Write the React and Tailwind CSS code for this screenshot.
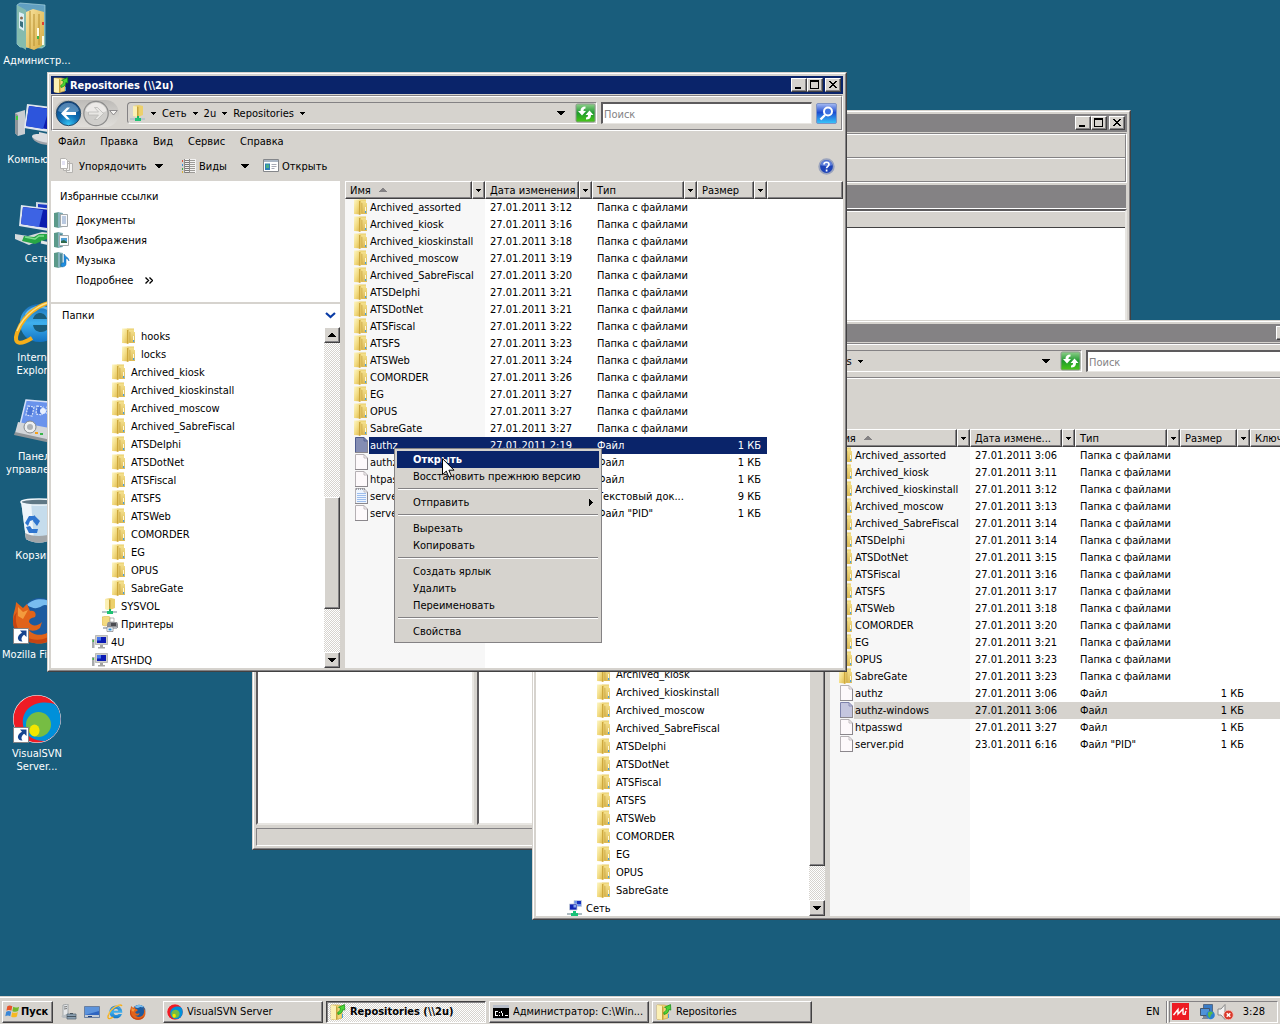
import React from "react";
import clsx from "clsx";

const RAISED =
  "border border-t-white border-l-white border-r-[#424142] border-b-[#424142] bg-[#d6d3ce] shadow-[inset_-1px_-1px_0_#848284]";
const DITHER = "bg-[repeating-conic-gradient(#fff_0_25%,#d6d3ce_0_50%)] bg-[length:2px_2px]";

/* ---------- small glyphs ---------- */

function Caret({ size = 5, className }) {
  if (size === 7) {
    return (
      <svg width="8" height="4" viewBox="0 0 8 4" shapeRendering="crispEdges" className={className}>
        <path d="M0 0h8v1H7v1H6v1H5v1H3V3H2V2H1V1H0z" fill="currentColor" />
      </svg>
    );
  }
  return (
    <svg width="5" height="3" viewBox="0 0 5 3" shapeRendering="crispEdges" className={className}>
      <path d="M0 0h5v1H4v1H3v1H2V2H1V1H0z" fill="currentColor" />
    </svg>
  );
}

function FolderIcon() {
  return (
    <svg width="14" height="16" viewBox="0 0 14 16" className="shrink-0">
      <defs>
        <linearGradient id="fl" x1="0" y1="0" x2="1" y2="1">
          <stop offset="0" stopColor="#fdf7c8" />
          <stop offset=".5" stopColor="#f3dd85" />
          <stop offset="1" stopColor="#dcb64a" />
        </linearGradient>
        <linearGradient id="fr" x1="0" y1="0" x2="0" y2="1">
          <stop offset="0" stopColor="#f6e391" />
          <stop offset="1" stopColor="#dcba55" />
        </linearGradient>
      </defs>
      <path d="M5 1h7v3h1v11H5z" fill="url(#fr)" />
      <path d="M5 .5h7v1H5z" fill="#e6ca62" />
      <path d="M0 .5h5l1 1V16l-2-.8L0 15z" fill="url(#fl)" />
      <path d="M5 2h1.500v14L5 15.300z" fill="#cda73c" />
      <path d="M6.500 3h1v12h-1z" fill="#e9cd6e" />
      <path d="M7.500 4h.8v10.500h-.8z" fill="#c9a545" />
      <path d="M11 8h1v5h-1z" fill="#fff8d8" />
      <path d="M12 8h1v6h-1z" fill="#e3c768" />
      <path d="M11 12h1.200v2H11z" fill="#4b9fdd" />
    </svg>
  );
}

function FolderUpIcon() {
  return (
    <svg width="16" height="16" viewBox="0 0 16 16" className="shrink-0">
      <path d="M1 1h7l4 1v12l-7 2-4-1z" fill="#f0d677" stroke="#c7a23c" strokeWidth="0.6" />
      <path d="M1 1l5 1v13.700L1 15z" fill="#fbf0b4" />
      <path d="M6 2l1.500 1v12L6 15.700z" fill="#c7a23c" />
      <path d="M8 10.500c3.200-.8 4.700-2.500 4.800-5l2 .6L14.500.600 8.500 3.300l2 .9C10.300 6.500 9.500 7.500 7.700 8.500z" fill="#4bd534" stroke="#148a12" strokeWidth="0.7" />
      <path d="M12 10h1v4h-1z" fill="#4aa0e2" />
    </svg>
  );
}

function NetFolderIcon() {
  return (
    <svg width="15" height="16" viewBox="0 0 15 16" className="shrink-0">
      <path d="M3 1 9 0l4 1v9l-5 2-5-1z" fill="#ecd06b" />
      <path d="M3 1l4 .5V12l-4-1z" fill="#fbf0b4" />
      <path d="M7 1.500 8.500 2v9.500L7 12z" fill="#c7a23c" />
      <path d="M7 11h2v2h2v2H5v-2h2z" fill="#17b567" />
      <path d="M0 13h5v2H0zM11 13h4v2h-4z" fill="#b8c6cc" />
      <path d="M5 13h6v3H5z" fill="#1fc274" />
    </svg>
  );
}

function PrintersIcon() {
  return (
    <svg width="16" height="16" viewBox="0 0 16 16" className="shrink-0">
      <path d="M0 1l5-1 3 1v8l-5 1-3-1z" fill="#f3da80" stroke="#d0ad4a" strokeWidth="0.5" />
      <path d="M8 2h4v4H8z" fill="#fff" stroke="#999" strokeWidth="0.7" />
      <path d="M6 6h9l1 2v4H5V8z" fill="#8d8f94" />
      <path d="M9 7h5v3H9z" fill="#4a4c52" />
      <path d="M1 11h14v2H1z" fill="#b6babf" />
      <path d="M5 11h6v4.500H5z" fill="#fff" stroke="#7c8086" strokeWidth="0.7" />
      <path d="M6.500 12.500h3v2h-3z" fill="#2b8bd4" />
    </svg>
  );
}

function ComputerIcon() {
  return (
    <svg width="16" height="14" viewBox="0 0 16 14" className="shrink-0">
      <path d="M0 4h2.500v9H0z" fill="#a9abac" />
      <path d="M.6 5h1.300v2H.6z" fill="#3fb63f" />
      <path d="M3.500.5h12v9h-12z" fill="#d0d0cc" stroke="#9a9a98" strokeWidth="0.6" />
      <path d="M5 2h9v6H5z" fill="#0c1bb4" />
      <path d="M5 2h4v3.500H5z" fill="#4a78ec" />
      <path d="M8 10h3v2h2v1.500H6V12h2z" fill="#a5a5a3" />
    </svg>
  );
}

function NetworkIcon() {
  return (
    <svg width="15" height="16" viewBox="0 0 15 16" className="shrink-0">
      <path d="M7 .5h7.500v6H7z" fill="#6c93ea" stroke="#c3cbd8" strokeWidth="0.7" />
      <path d="M10 1h4v3h-4z" fill="#1730bd" />
      <path d="M2.500 4h7.500v6H2.500z" fill="#1226b4" stroke="#c3cbd8" strokeWidth="0.8" />
      <path d="M6.500 5h2.500v2.500H6.500z" fill="#83a4f3" />
      <path d="M6 11h3v2h2v3H4v-3h2z" fill="#17c277" />
      <path d="M0 13h4v2H0zM11 13h4v2h-4z" fill="#aebcc2" />
    </svg>
  );
}

function FileIcon({ fill = "#fdf9fb", stroke = "#b5b0b4", lined }) {
  return (
    <svg width="14" height="16" viewBox="0 0 14 16" className="shrink-0">
      <path d="M1.500.5H10L13.500 4v11.500H1.500z" fill={fill} stroke={stroke} />
      <path d="M1 15.500h13M13.500 4v12" stroke="#8b878c" />
      <path d="M10 .5V4h3.500" fill="none" stroke={stroke} strokeWidth="0.8" />
      {lined && <path d="M3 5.500h9M3 7.500h9M3 9.500h9M3 11.500h9M3 13.500h9" stroke="#9dbdec" />}
      {lined && <path d="M2 1h9" stroke="#848890" strokeWidth="1.600" strokeDasharray="1 1" />}
    </svg>
  );
}

function Orbit({ size = 16, idPrefix }) {
  return (
    <svg width={size} height={size} viewBox="0 0 48 48" className="shrink-0">
      <defs>
        <clipPath id={`${idPrefix}-c`}>
          <circle cx="24" cy="24" r="23.500" />
        </clipPath>
      </defs>
      <circle cx="24" cy="24" r="24" fill="#fff" />
      <g clipPath={`url(#${idPrefix}-c)`}>
        <path d="M0 0h48v48H0z" fill="#ee1c25" />
        <path d="M10 30C8 14 22 5 38 8l12 4v26L32 46C20 46 11 40 10 30z" fill="#0090da" />
        <circle cx="25.500" cy="29.500" r="12.500" fill="#76bd43" />
        <ellipse cx="21.500" cy="35.500" rx="5" ry="6" fill="#f2e600" />
      </g>
    </svg>
  );
}

function IeIcon({ size = 16 }) {
  return (
    <svg width={size} height={size} viewBox="0 0 48 48" className="shrink-0">
      <defs>
        <linearGradient id="ie" x1="0" y1="0" x2="0" y2="1">
          <stop offset="0" stopColor="#1b6fb8" />
          <stop offset=".5" stopColor="#3fb0ee" />
          <stop offset="1" stopColor="#1173c4" />
        </linearGradient>
      </defs>
      <path
        d="M27 5c11 0 19 8 19 21H20c1 5 4 7 8 7 3 0 5-1 7-3h10c-3 8-9 13-18 13C15 43 7 35 7 24S15 5 27 5zM20 20h14c-1-4-4-6-7-6s-6 2-7 6z"
        fillRule="evenodd"
        fill="url(#ie)"
      />
      <path d="M13 16c3-5 8-8 14-8 5 0 10 2 13 6" fill="none" stroke="#8fd6fb" strokeWidth="2.500" opacity=".7" />
      <path d="M45 6C40-2 12 10 4 34c-4 12 4 12 15 5" fill="none" stroke="#f5ae1a" strokeWidth="4" />
      <path d="M40 3C28 4 11 15 4 32" fill="none" stroke="#fde08a" strokeWidth="1.500" />
    </svg>
  );
}

function FirefoxIcon({ size = 16 }) {
  return (
    <svg width={size} height={size} viewBox="0 0 48 48" className="shrink-0">
      <circle cx="27" cy="21" r="19" fill="#1c5ba0" />
      <path d="M14 9C20 2 34 1 41 9c-5 3-7-2-12 1s-9 3-15-1z" fill="#79bdf0" />
      <path d="M3 6l7 6 4-4 3 7c4-1 7 2 5 6-4 1-6 2-6 5 3 5 9 4 13 0l-2 6c-5 4-10 3-12 1 5 8 20 8 25-2 3-6 3-13 0-20 7 8 8 18 4 26-5 9-14 12-23 10C7 45 0 36 0 24 0 17 3 12 3 6z" fill="#e1631a" />
      <path d="M4 16c-3 9 0 20 9 25 10 5 22 3 30-6-3 10-13 14-22 12C7 45 0 36 0 25c0-4 2-7 4-9z" fill="#c64412" />
      <path d="M5 11l5 5 5-2-5 9-5-3z" fill="#f39b3d" />
    </svg>
  );
}

/* ---------- desktop shortcuts ---------- */

function ShortcutArrow() {
  return (
    <g>
      <path d="M.5 32.500h15v15H.5z" fill="#fff" stroke="#848284" />
      <path d="M7 34.500h6.500V41l-2.300-2.300C8 41 8 43.500 9.500 45.500 4.500 46 2.500 40 9 36.700z" fill="#16448f" />
    </g>
  );
}

function UserFolderArt() {
  return (
    <svg width="48" height="48" viewBox="0 0 48 48">
      <defs>
        <linearGradient id="ub" x1="0" y1="0" x2="0" y2="1">
          <stop offset="0" stopColor="#5f9dc4" />
          <stop offset="1" stopColor="#7dbf9d" />
        </linearGradient>
        <linearGradient id="uy" x1="0" y1="0" x2="1" y2="1">
          <stop offset="0" stopColor="#f8e4a0" />
          <stop offset="1" stopColor="#d6ab42" />
        </linearGradient>
      </defs>
      <path d="M4 3l3-2 25 2v41l-3 2-22-1-3-3z" fill="url(#ub)" stroke="#a8d6df" strokeWidth="0.7" />
      <path d="M13 10l7-3 11 3v32l-4 3-6 3-8-3z" fill="url(#uy)" />
      <path d="M4 3l9 5v40l-9-6z" fill="#86bcae" opacity=".95" />
      <path d="M6 10l5 2v17l-5-3z" fill="#dbeef5" />
      <circle cx="8.500" cy="16" r="1.500" fill="#8f6a4a" />
      <path d="M7 19l3 1v6l-3-2z" fill="#39707f" />
      <path d="M17 9v37M21 12v32M26 12v31" stroke="#b78f30" strokeWidth="1" />
      <path d="M24 26h2v10h-2zM29 34h2v9h-2z" fill="#fffbe3" />
      <path d="M24 34h2v3h-2z" fill="#43b54a" />
      <path d="M29 20h2v3h-2z" fill="#e2412e" />
    </svg>
  );
}

function ComputerArt() {
  return (
    <svg width="48" height="48" viewBox="0 0 48 48">
      <path d="M2 12l10-3v24l-7 2-3-3z" fill="#c9cdd1" />
      <path d="M2 12l3 2v21l-3-3z" fill="#8e9499" />
      <path d="M3 15h2v4H3z" fill="#3ecb3e" />
      <path d="M14 3l33 4v26l-36-6z" fill="#dfe6ee" />
      <path d="M16 5l31 4v21l-34-5z" fill="#0c1cae" />
      <path d="M16 5l20 3-6 20-17-3z" fill="#2d55dc" />
      <path d="M26 31l9 2 12 3v6c-10 3-24 0-28-6 0-3 3-3 7-3z" fill="#dcdde0" />
      <path d="M19 36c5 5 18 7 28 5v2c-12 3-26 0-28-7z" fill="#a1a4aa" />
    </svg>
  );
}

function NetworkArt() {
  return (
    <svg width="48" height="48" viewBox="0 0 48 48">
      <path d="M23 2l24 2v22H23z" fill="#cfd8e4" />
      <path d="M25 4l22 2v18H25z" fill="#1b37c6" />
      <path d="M8 5l39 5v23L6 26z" fill="#dfe6ee" />
      <path d="M10 7l37 4v19L8 24z" fill="#0c1cae" />
      <path d="M10 7l20 3-4 17-18-3z" fill="#3d63e4" />
      <path d="M2 34l13 2 14-4 18 2v3l-15 1-16 7L2 39z" fill="#d5dadc" />
      <path d="M11 36l10 1 5-3h8v5l-12 5-13-3z" fill="#28a745" />
      <path d="M12 37l10 2 4-3h5" stroke="#7fe08f" strokeWidth="1.500" fill="none" />
      <path d="M28 42l19 4" stroke="#e3e7e9" strokeWidth="3" />
    </svg>
  );
}

function ControlPanelArt() {
  return (
    <svg width="48" height="48" viewBox="0 0 48 48">
      <path d="M13 2l34 3v28L7 27z" fill="#6a93ec" stroke="#d5e0f8" strokeWidth="1.500" />
      <path d="M15 8l6 1-2 9-6-1zM24 8l6 1-1 8-6-1zM34 9h9v8h-9z" fill="#4c77d8" stroke="#dbe6fb" strokeWidth="1.200" strokeDasharray="2 1" />
      <circle cx="30" cy="13" r="3" fill="#e8f0ff" />
      <path d="M5 24l42 8v13L2 35z" fill="#d3d6da" />
      <path d="M2 34l45 10v3L1 37z" fill="#8f9498" />
      <circle cx="17" cy="29" r="6" fill="#eef0f1" stroke="#85898d" />
      <circle cx="17" cy="29" r="3" fill="#aeb2b6" />
      <path d="M22 34h3v2h-3z" fill="#f6a01a" />
      <path d="M27 35h3v2h-3z" fill="#39b54a" />
    </svg>
  );
}

function RecycleBinArt() {
  return (
    <svg width="48" height="48" viewBox="0 0 48 48">
      <path d="M8 4h36l-5 38c-8 5-18 5-26 0z" fill="#c5dcec" />
      <path d="M8 4h10l3 40c-3 0-6-1-8-2z" fill="#edf5fa" />
      <ellipse cx="26" cy="5" rx="18" ry="3" fill="#5f7886" stroke="#eef6fb" strokeWidth="1.500" />
      <path d="M12 36c7 4 20 4 28 0l-1 6c-8 5-18 5-26 0z" fill="#a2a6a9" />
      <path d="M12 26l4-7h6l-2 4-3 1-2 5zM21 18l6 6-3 5-4-5zM13 30l4-1 2 3h6l-1 4h-8z" fill="#2e75cf" />
    </svg>
  );
}

function FirefoxArt() {
  return (
    <div className="grid">
      <div className="col-start-1 row-start-1">
        <FirefoxIcon size={48} />
      </div>
      <svg width="48" height="48" viewBox="0 0 48 48" className="col-start-1 row-start-1">
        <ShortcutArrow />
      </svg>
    </div>
  );
}

function VisualSvnArt() {
  return (
    <div className="grid">
      <div className="col-start-1 row-start-1">
        <Orbit size={48} idPrefix="desk" />
      </div>
      <svg width="48" height="48" viewBox="0 0 48 48" className="col-start-1 row-start-1">
        <ShortcutArrow />
      </svg>
    </div>
  );
}

const shortcuts = [
  { label: "Администр...", art: <UserFolderArt /> },
  { label: "Компьютер", art: <ComputerArt /> },
  { label: "Сеть", art: <NetworkArt /> },
  { label: "Internet Explorer", art: <IeIcon size={48} /> },
  { label: "Панель управления", art: <ControlPanelArt /> },
  { label: "Корзина", art: <RecycleBinArt /> },
  { label: "Mozilla Firefox", art: <FirefoxArt />, wide: true },
  { label: "VisualSVN Server...", art: <VisualSvnArt /> },
];

function DesktopShortcut({ label, art, wide }) {
  return (
    <button className="flex flex-col items-center w-[74px] h-[99px] pt-0.5 gap-1 text-white leading-[13px]">
      {art}
      <span className={clsx("text-center", wide && "whitespace-nowrap")}>{label}</span>
    </button>
  );
}

/* ---------- window chrome ---------- */

function CaptionButton({ kind }) {
  return (
    <button aria-label={kind} className={clsx("w-4 h-3.5 flex items-center justify-center text-black", RAISED)}>
      <svg width="12" height="10" viewBox="0 0 12 10" shapeRendering="crispEdges">
        {kind === "minimize" && <path d="M2 7h6v2H2z" fill="currentColor" />}
        {kind === "maximize" && <path d="M1 0h9v9H1zM2 2v6h7V2z" fillRule="evenodd" fill="currentColor" />}
        {kind === "close" && (
          <path d="M2 1h2v1h1v1h2V2h1V1h2v1H9v1H8v1H7v1h1v1h1v1h1v1H8V7H7V6H5v1H4v1H2V7h1V6h1V5h1V4H4V3H3V2H2z" fill="currentColor" />
        )}
      </svg>
    </button>
  );
}

function DesktopWindow({ title, icon, active, className, children }) {
  return (
    <section
      className={clsx(
        "absolute border border-t-[#d6d3ce] border-l-[#d6d3ce] border-r-[#424142] border-b-[#424142]",
        className
      )}
    >
      <div className="h-full flex flex-col border border-t-white border-l-white border-r-[#848284] border-b-[#848284] bg-[#d6d3ce] p-0.5">
        <div className={clsx("h-[18px] shrink-0 flex items-center px-0.5 text-white font-bold", active ? "bg-[#0a246a]" : "bg-[#848284]")}>
          {icon}
          <span className="flex-1 pl-px whitespace-nowrap">{title}</span>
          <CaptionButton kind="minimize" />
          <CaptionButton kind="maximize" />
          <div className="w-0.5" />
          <CaptionButton kind="close" />
        </div>
        {children}
      </div>
    </section>
  );
}

function Etched({ className, children }) {
  return (
    <div className="shrink-0 border border-t-[#848284] border-l-[#848284] border-r-white border-b-white">
      <div className={clsx("border border-t-white border-l-white border-r-[#848284] border-b-[#848284]", className)}>
        {children}
      </div>
    </div>
  );
}

/* ---------- explorer ---------- */

function NavButtons() {
  return (
    <div className="flex items-center h-[27px] rounded-full bg-linear-to-b from-[#bdbbb8] via-[#d0ceca] to-[#e0deda] px-px">
      <button aria-label="Назад">
        <svg width="27" height="27" viewBox="0 0 27 27" className="block">
          <defs>
            <radialGradient id="nb" cx=".5" cy=".95" r=".9">
              <stop offset="0" stopColor="#35c5f5" />
              <stop offset=".45" stopColor="#0f6fb4" />
              <stop offset="1" stopColor="#0b3f7d" />
            </radialGradient>
          </defs>
          <circle cx="13.500" cy="13.500" r="12.200" fill="url(#nb)" stroke="#2c4d68" />
          <path d="M3 11a10.800 10.800 0 0 1 21 0c-6 3-15 3-21 0z" fill="#a8cfe6" opacity=".45" />
          <path d="M6 13.500l6-6h3l-4 4.500h10v3H11l4 4.500h-3z" fill="#fff" />
        </svg>
      </button>
      <button aria-label="Вперёд">
        <svg width="27" height="27" viewBox="0 0 27 27" className="block">
          <circle cx="14" cy="13.500" r="12.200" fill="#cfcecb" stroke="#8b8b8b" strokeWidth="1.200" />
          <path d="M3.500 11a10.800 10.800 0 0 1 21 0c-6 3-15 3-21 0z" fill="#f2f1ef" opacity=".8" />
          <path d="M21.500 13.500l-6-6h-3l4 4.500h-10v3h10l-4 4.500h3z" fill="#e8e7e4" stroke="#b5b4b1" strokeWidth="0.700" />
        </svg>
      </button>
      <svg width="9" height="6" viewBox="0 0 9 6">
        <path d="M.7.5h7.600L4.500 5z" fill="#f3f2f0" stroke="#848284" strokeWidth="0.900" />
      </svg>
    </div>
  );
}

function AddressBar({ crumbs, crumbPad }) {
  return (
    <Etched className="h-[34px] flex items-center gap-1 pl-px pr-1">
      <NavButtons />
      <div className="flex-1 ml-1 h-[22px] flex items-center rounded-l-sm border border-t-[#848284] border-l-[#848284] border-r-white border-b-white pl-0.5">
        <NetFolderIcon />
        <div className={clsx("flex-1 flex items-center gap-1.5", crumbPad)}>
          <Caret />
          {crumbs.map((crumb) => (
            <React.Fragment key={crumb}>
              <a href="#" className="whitespace-nowrap">{crumb}</a>
              <Caret />
            </React.Fragment>
          ))}
        </div>
        <Caret size={7} />
        <button aria-label="Обновить" className="ml-2.5">
          <svg width="21" height="20" viewBox="0 0 21 20" className="block">
            <defs>
              <linearGradient id="rf" x1="0" y1="0" x2="0" y2="1">
                <stop offset="0" stopColor="#8fd08c" />
                <stop offset=".5" stopColor="#1f9a2e" />
                <stop offset="1" stopColor="#49c818" />
              </linearGradient>
            </defs>
            <rect x="1" y="1" width="19" height="18" rx="1.500" fill="url(#rf)" stroke="#8b9a8b" />
            <path d="M10.500 3.500C7 3.500 5.500 5 5.500 8H3l4 4.500L11 8H8.500c0-1.500.5-2.300 2-2.500z" fill="#fff" />
            <path d="M11 16.500c3.500 0 5-1.500 5-4.500h2.500l-4-4.500L10.500 12H13c0 1.500-.5 2.300-2 2.500z" fill="#fff" />
          </svg>
        </button>
      </div>
      <input
        aria-label="Поиск"
        placeholder="Поиск"
        className="w-[211px] h-[22px] bg-white px-px pt-0.5 border-t-2 border-l-2 border-r border-b border-t-[#5d5b5d] border-l-[#5d5b5d] border-r-[#e8e6e2] border-b-[#e8e6e2] placeholder:text-[#848284] outline-none"
      />
      <button aria-label="Найти">
        <svg width="21" height="21" viewBox="0 0 21 21" className="block">
          <defs>
            <linearGradient id="sb" x1="0" y1="0" x2="0" y2="1">
              <stop offset="0" stopColor="#a9bdf3" />
              <stop offset=".45" stopColor="#1d4dd0" />
              <stop offset="1" stopColor="#38c8fb" />
            </linearGradient>
          </defs>
          <rect x=".5" y=".5" width="20" height="20" rx="1.500" fill="url(#sb)" stroke="#7f93c4" />
          <path d="M4.500 16.500 9 12" stroke="#fff" strokeWidth="2.400" />
          <circle cx="12" cy="8.500" r="4" fill="#3f74e2" stroke="#fff" strokeWidth="2" />
        </svg>
      </button>
    </Etched>
  );
}

function MenuBar() {
  return (
    <nav className="h-5 shrink-0 flex items-center gap-[15px] pl-[7px]">
      {["Файл", "Правка", "Вид", "Сервис", "Справка"].map((item) => (
        <button key={item}>{item}</button>
      ))}
    </nav>
  );
}

function Toolbar() {
  return (
    <div className="h-[30px] shrink-0 flex items-center pl-2 pr-2">
      <button className="flex items-center gap-1 w-[122px]">
        <svg width="16" height="16" viewBox="0 0 16 16">
          <path d="M7.500 5.500h6v9h-6zM4.500 3.500h6v9h-6z" fill="#f4f3f1" stroke="#b5b3b0" />
          <path d="M1.500.5h5l2 2v8h-7z" fill="#fff" stroke="#b5b3b0" />
          <path d="M3 4h3M3 6h3" stroke="#c9c8ea" />
        </svg>
        Упорядочить
        <Caret size={7} className="ml-1" />
      </button>
      <button className="flex items-center gap-0.5 w-[82px]">
        <svg width="16" height="16" viewBox="0 0 16 16" shapeRendering="crispEdges">
          <path d="M3 1h12v14H3z" fill="#f4f3f2" />
          <path d="M4 2h4v1H4zM4 4h4v1H4zM4 6h4v1H4zM4 8h4v1H4zM4 10h4v1H4zM4 12h4v1H4zM4 14h4v1H4z" fill="#7d7b79" />
          <path d="M9 2h5v1H9zM9 4h5v1H9zM9 6h5v1H9zM9 8h5v1H9zM9 10h5v1H9zM9 12h5v1H9zM9 14h5v1H9z" fill="#9d9b98" />
          <path d="M3 1h1v14H3zM8 1h1v14H8z" fill="#8f8d8a" />
          <path d="M1 2h1v2H1z" fill="#d9533b" />
          <path d="M1 6h1v2H1z" fill="#3b8fd9" />
          <path d="M1 10h1v2H1z" fill="#41ad49" />
          <path d="M1 13h1v2H1z" fill="#d9b13b" />
        </svg>
        Виды
        <Caret size={7} className="ml-3" />
      </button>
      <button className="flex items-center gap-[3px]">
        <svg width="16" height="14" viewBox="0 0 16 14">
          <path d="M.5.500h15v12H.5z" fill="#fff" stroke="#84868a" />
          <path d="M1 1h14v2H1z" fill="#a9b5c4" />
          <path d="M2 4.500h5V11H2z" fill="#2d7fb8" />
          <path d="M3 5.500h3V9H3z" fill="#4bb082" />
          <path d="M8.500 5.500h5M8.500 7.500h5M8.500 9.500h3" stroke="#a7a9b4" />
        </svg>
        Открыть
      </button>
      <button aria-label="Справка" className="ml-auto">
        <svg width="17" height="17" viewBox="0 0 17 17" className="block">
          <circle cx="8.500" cy="8.500" r="7.300" fill="#1f44b8" stroke="#9aa3bd" strokeWidth="1.800" />
          <path d="M2.500 7a6.200 6.200 0 0 1 12 0c-3 1.500-9 1.500-12 0z" fill="#7b98e8" opacity=".7" />
          <path d="M6 6.500c0-3 5-3 5 0 0 1.700-2.400 1.900-2.400 3.700M8.600 11.500v2" fill="none" stroke="#fff" strokeWidth="1.700" />
        </svg>
      </button>
    </div>
  );
}

function FavoriteIcon({ kind }) {
  return (
    <svg width="16" height="16" viewBox="0 0 16 16" className="shrink-0">
      <path d="M0 1l5-1v16l-5-1z" fill="#5c9a8a" />
      <path d="M4 0l5 1v14l-5 1z" fill="#86b3bd" />
      <path d="M6 1.500l2 .5v12.500l-2 .5z" fill="#4f8996" />
      {kind === "docs" && (
        <>
          <path d="M6.500 2.500h7v12h-7z" fill="#f8fafb" stroke="#a3a8aa" />
          <path d="M8 5h4M8 7h4M8 9h4M8 11h4" stroke="#7a97c4" />
        </>
      )}
      {kind === "pics" && (
        <>
          <path d="M5.500 3.500h9v10h-9z" fill="#f8fafb" stroke="#a3a8aa" />
          <path d="M7 6h6v5H7z" fill="#4f9fd6" />
          <path d="M7 9l3-1 3 2v1H7z" fill="#2f6a4b" />
        </>
      )}
      {kind === "music" && (
        <path d="M10 2c1 3 5 3 5 7-1-2-2-2.500-3-2.500V12c0 3-5 4-5 1 0-2 2-2.500 3-2z" fill="#1f8fe0" stroke="#0d62ad" strokeWidth="0.500" />
      )}
    </svg>
  );
}

function FavoriteLinks() {
  return (
    <div className="h-[121px] shrink-0 bg-white pl-[3px] pt-1.5">
      <h2 className="pl-1.5 leading-5">Избранные ссылки</h2>
      <ul className="pt-[3px]">
        {[
          ["Документы", "docs"],
          ["Изображения", "pics"],
          ["Музыка", "music"],
        ].map(([label, kind]) => (
          <li key={kind}>
            <a href="#" className="h-5 flex items-center gap-1.5">
              <FavoriteIcon kind={kind} />
              {label}
            </a>
          </li>
        ))}
      </ul>
      <button className="h-5 flex items-center gap-3 pl-[22px]">
        Подробнее
        <svg width="8" height="7" viewBox="0 0 8 7">
          <path d="M.5.500l3 3-3 3M4.500.500l3 3-3 3" fill="none" stroke="#000" strokeWidth="1.400" />
        </svg>
      </button>
    </div>
  );
}

const treeIcons = {
  folder: <FolderIcon />,
  share: <NetFolderIcon />,
  printers: <PrintersIcon />,
  computer: <ComputerIcon />,
  network: <NetworkIcon />,
};

const indents = ["pl-[31px]", "pl-[41px]", "pl-[51px]", "pl-[61px]", "pl-[71px]"];

function ScrollBar({ before, after }) {
  return (
    <div className={clsx("w-4 shrink-0 flex flex-col", DITHER)}>
      <button aria-label="Вверх" className={clsx("h-4 shrink-0 flex items-center justify-center", RAISED)}>
        <Caret size={7} className="rotate-180" />
      </button>
      <div className={before} />
      <div className={clsx("flex-1", RAISED)} />
      <div className={after} />
      <button aria-label="Вниз" className={clsx("h-4 shrink-0 flex items-center justify-center", RAISED)}>
        <Caret size={7} />
      </button>
    </div>
  );
}

function FolderTree({ nodes, pad, scroll }) {
  return (
    <>
      <div className="h-[23px] mt-0.5 shrink-0 bg-white flex items-center justify-between pl-[11px] pr-1">
        <span>Папки</span>
        <button aria-label="Свернуть">
          <svg width="11" height="7" viewBox="0 0 11 7" className="block">
            <path d="M1 1l4.500 4L10 1" fill="none" stroke="#0a3ca6" strokeWidth="2.200" />
          </svg>
        </button>
      </div>
      <div className="flex-1 min-h-0 flex bg-white">
        <ul className={clsx("flex-1 overflow-hidden", pad)}>
          {nodes.map(([label, level, icon = "folder"]) => (
            <li key={label} className={clsx("h-[18px] flex items-center whitespace-nowrap", indents[level])}>
              <span className="w-[19px] shrink-0">{treeIcons[icon]}</span>
              {label}
            </li>
          ))}
        </ul>
        <ScrollBar {...scroll} />
      </div>
    </>
  );
}

function ColumnHeader({ label, sorted }) {
  return (
    <div className="h-[18px] flex">
      <button className={clsx("flex-1 min-w-0 flex items-center gap-2 pl-1 whitespace-nowrap overflow-hidden", RAISED)}>
        {label}
        {sorted && <Caret size={7} className="rotate-180 text-[#848284]" />}
      </button>
      <button aria-label={`Фильтр: ${label}`} className={clsx("w-[13px] shrink-0 flex items-center justify-center", RAISED)}>
        <Caret />
      </button>
    </div>
  );
}

function FileList({ columns, files, selected, focused }) {
  const selectedBg = focused ? "bg-[#0a246a] text-white" : "bg-[#d6d3ce]";
  return (
    <div className="flex-1 min-w-0 overflow-hidden bg-[linear-gradient(90deg,#f7f7f7_140px,#fff_140px)]">
      <table className="w-full table-fixed border-collapse leading-[17px] whitespace-nowrap">
        <thead>
          <tr>
            {columns.map((col, i) => (
              <th key={col.label} className={clsx("p-0 font-normal text-left", col.width)}>
                <ColumnHeader label={col.label} sorted={i === 0} />
              </th>
            ))}
            {columns.length === 4 && (
              <td className="p-0">
                <div className={clsx("h-[18px]", RAISED)} />
              </td>
            )}
          </tr>
        </thead>
        <tbody>
          {files.map(([name, date, type = "Папка с файлами", size = "", icon = "folder"]) => {
            const isSelected = name === selected;
            const cell = isSelected ? selectedBg : "";
            return (
              <tr key={name + date} className="h-[17px]">
                <td className="p-0">
                  <div className="flex h-[17px]">
                    <span className="w-6 shrink-0 pl-[9px]">
                      {icon === "folder" && <FolderIcon />}
                      {icon === "file" && !isSelected && <FileIcon />}
                      {icon === "file" && isSelected && (
                        <FileIcon fill={focused ? "#848db3" : "#c5c6df"} stroke={focused ? "#4d5a8e" : "#7e82ac"} />
                      )}
                      {icon === "text" && <FileIcon lined fill="#eef5fe" />}
                    </span>
                    <span className={clsx("flex-1 pl-px", cell)}>{name}</span>
                  </div>
                </td>
                <td className={clsx("p-0 pl-[5px]", cell)}>{date}</td>
                <td className={clsx("p-0 pl-[5px]", cell)}>{type}</td>
                <td className={clsx("p-0 pr-1.5 text-right", cell)}>{size}</td>
                <td className={clsx("p-0", columns.length > 4 && cell)} />
              </tr>
            );
          })}
        </tbody>
      </table>
    </div>
  );
}

function ExplorerWindow({ title, active, className, crumbs, crumbPad, tree, treePad, scroll, list }) {
  return (
    <DesktopWindow title={title} icon={<FolderUpIcon />} active={active} className={className}>
      <div className="h-px shrink-0" />
      <AddressBar crumbs={crumbs} crumbPad={crumbPad} />
      <MenuBar />
      <Toolbar />
      <div className="flex-1 min-h-0 flex gap-[5px]">
        <div className="w-[289px] shrink-0 flex flex-col">
          <FavoriteLinks />
          <FolderTree nodes={tree} pad={treePad} scroll={scroll} />
        </div>
        <FileList {...list} focused={active} />
      </div>
    </DesktopWindow>
  );
}

/* ---------- server manager ---------- */

function ServerManagerWindow({ className }) {
  const sunken = "border-2 border-t-[#5d5b5d] border-l-[#5d5b5d] border-r-[#e8e6e2] border-b-[#e8e6e2]";
  return (
    <DesktopWindow title="VisualSVN Server" icon={<Orbit idPrefix="title" />} className={className}>
      <div className="h-px shrink-0" />
      <Etched>
        <div className="h-[23px] border-b border-[#848284]" />
        <div className="h-[23px] border-t border-white" />
      </Etched>
      <div className="flex-1 min-h-0 flex gap-[3px] pt-0.5">
        <div className={clsx("w-[218px] bg-white", sunken)} />
        <div className="flex-1 flex flex-col">
          <div className="h-6 bg-[#848284] mr-px border-b border-white" />
          <div className={clsx("flex-1 bg-white", sunken)}>
            <div className="h-[17px] bg-[#d6d3ce] border-t border-white border-b border-b-[#424142]" />
          </div>
        </div>
      </div>
      <div className="h-[18px] shrink-0 mt-[3px] border border-t-[#848284] border-l-[#848284] border-r-white border-b-white" />
    </DesktopWindow>
  );
}

/* ---------- context menu ---------- */

const menuGroups = [
  ["Открыть", "Восстановить прежнюю версию"],
  ["Отправить"],
  ["Вырезать", "Копировать"],
  ["Создать ярлык", "Удалить", "Переименовать"],
  ["Свойства"],
];

function ContextMenu({ className }) {
  return (
    <div role="menu" className={clsx("absolute bg-[#d6d3ce] border border-[#848284] p-0.5 leading-[17px]", className)}>
      {menuGroups.map((group, i) => (
        <React.Fragment key={group[0]}>
          {i > 0 && <hr className="mx-px mt-[3px] mb-1 h-0.5 border-0 border-t border-t-[#848284] bg-white" />}
          {group.map((item) => (
            <button
              key={item}
              role="menuitem"
              className={clsx(
                "w-full h-[17px] flex items-center justify-between pl-4 pr-1.5 whitespace-nowrap",
                item === "Открыть" && "bg-[#0a246a] text-white font-bold"
              )}
            >
              {item}
              {item === "Отправить" && (
                <svg width="4" height="7" viewBox="0 0 4 7" shapeRendering="crispEdges">
                  <path d="M0 0h1v1h1v1h1v1h1v1H3v1H2v1H1v1H0z" fill="#000" />
                </svg>
              )}
            </button>
          ))}
        </React.Fragment>
      ))}
    </div>
  );
}

/* ---------- taskbar ---------- */

function TaskButton({ icon, label, active }) {
  return (
    <button
      className={clsx(
        "w-40 h-[22px] flex items-center gap-1 pl-[3px] pr-1 text-left",
        active
          ? clsx("font-bold border border-t-[#424142] border-l-[#424142] border-r-white border-b-white shadow-[inset_1px_1px_0_#848284]", DITHER)
          : RAISED
      )}
    >
      {icon}
      <span className="truncate">{label}</span>
    </button>
  );
}

function QuickLaunch() {
  return (
    <div className="flex items-center gap-[7px] ml-2">
      <button aria-label="Диспетчер сервера">
        <svg width="16" height="16" viewBox="0 0 16 16" className="block">
          <path d="M2 1l5-1v11l-5 2z" fill="#e4e6e8" stroke="#8b8f93" strokeWidth="0.700" />
          <path d="M3 3l3-.5M3 5l3-.5" stroke="#777" />
          <path d="M0 12l6-2 4 2v2H2z" fill="#b7bcc0" />
          <path d="M6 10h9v5H6z" fill="#8ba0b2" stroke="#5d6c79" strokeWidth="0.800" />
          <path d="M9 9.500h3M6 12.500h9" stroke="#47545f" />
        </svg>
      </button>
      <button aria-label="Свернуть все окна">
        <svg width="16" height="16" viewBox="0 0 16 16" className="block">
          <path d="M.5 2.500h15v11H.5z" fill="#2f65c0" stroke="#6a7f9f" />
          <path d="M1 3h14v4L1 11z" fill="#5c93dc" />
          <path d="M1 11h14v2H1z" fill="#c2cbd6" />
          <path d="M4 12h4v1H4z" fill="#1f3e7c" />
        </svg>
      </button>
      <button aria-label="Internet Explorer">
        <IeIcon />
      </button>
      <button aria-label="Mozilla Firefox">
        <FirefoxIcon />
      </button>
    </div>
  );
}

function Tray() {
  return (
    <div className="ml-auto flex items-center h-full">
      <span className="pr-1.5">EN</span>
      <div className="w-0.5 h-[22px] bg-[#848284] border-r border-white" />
      <div className="ml-px h-[22px] flex items-center pl-0.5 pr-3 border border-t-[#848284] border-l-[#848284] border-r-white border-b-white">
        <svg width="17" height="17" viewBox="0 0 17 17">
          <path d="M0 0h17v17H0z" fill="#ed1c24" />
          <path d="M1.500 12 6 6.500V11l5-5v4.500c0 1 .7 1 1.500.5M14 8c-.8 1.500-1 2.500-1 4M14.500 5v1.500" fill="none" stroke="#fff" strokeWidth="1.400" />
        </svg>
        <svg width="16" height="16" viewBox="0 0 16 16" className="ml-2.5">
          <path d="M4.500.5h9v8h-9z" fill="#3a7cc6" stroke="#566a85" />
          <path d="M1.500 4.500h9v7h-9z" fill="#4f92d8" stroke="#43576f" />
          <path d="M4 12h4v2H4zM3 14h6v1H3z" fill="#7b8592" />
          <circle cx="11.500" cy="11" r="4.300" fill="#2b7fd2" />
          <path d="M9 9c1-2 4-2 5 0l-2 2-1 3c-2-1-2-3-2-5z" fill="#56b84a" />
        </svg>
        <svg width="18" height="16" viewBox="0 0 18 16" className="ml-0.5">
          <path d="M1 5h3l4-4.500v15L4 11H1z" fill="#f2f2f2" stroke="#8a8a8a" />
          <circle cx="11.500" cy="11" r="4.800" fill="#d9392b" stroke="#f3c6c0" strokeWidth="0.800" />
          <path d="M9.700 9.200l3.600 3.600M13.300 9.200l-3.600 3.600" stroke="#fff" strokeWidth="1.500" />
        </svg>
        <time className="ml-2">3:28</time>
      </div>
    </div>
  );
}

function Taskbar() {
  return (
    <footer className="h-7 shrink-0 bg-[#d6d3ce] pt-px">
      <div className="h-[27px] flex items-center pl-0.5 pr-0.5 pt-0.5 pb-px border-t border-white">
        <button className={clsx("h-[22px] w-[51px] flex items-center gap-px pl-0.5 font-bold", RAISED)}>
          <svg width="15" height="15" viewBox="0 0 16 16" className="shrink-0">
            <path d="M2.500 2.500C4.500 1 6 1.500 7.800 2.500L6.800 7.300C5 6.300 3.500 6 1.500 7.200z" fill="#e8542a" />
            <path d="M8.800 3C10.500 4 12.500 4 15 2.800L14 7.500C12 8.700 9.800 8.500 7.800 7.600z" fill="#76b82a" />
            <path d="M1.300 8.200C3.300 7 5 7.300 6.600 8.200L5.600 13C4 12 2.300 12 .3 13z" fill="#3a87d6" />
            <path d="M7.600 8.700C9.600 9.700 11.500 9.700 13.700 8.500L12.700 13.300C10.500 14.500 8.500 14.500 6.600 13.500z" fill="#f6b923" />
          </svg>
          Пуск
        </button>
        <QuickLaunch />
        <div className="flex gap-[3px] ml-[17px]">
          <TaskButton icon={<Orbit idPrefix="task" />} label="VisualSVN Server" />
          <TaskButton active icon={<FolderUpIcon />} label="Repositories (\\2u)" />
          <TaskButton
            label="Администратор: C:\Win..."
            icon={
              <svg width="16" height="14" viewBox="0 0 16 14" className="shrink-0" shapeRendering="crispEdges">
                <path d="M0 0h16v14H0z" fill="#b7bdc8" />
                <path d="M0 3h16v10H0z" fill="#000" />
                <path d="M2 6h3v1H3v3h2v1H2zM6 7h1v1H6zM6 10h1v1H6zM8 6h1v2h1v3H9V8H8zM12 10h3v1h-3z" fill="#fff" />
              </svg>
            }
          />
          <TaskButton icon={<FolderUpIcon />} label="Repositories" />
        </div>
        <Tray />
      </div>
    </footer>
  );
}

/* ---------- data ---------- */

const mainTree = [
  ["hooks", 4],
  ["locks", 4],
  ["Archived_kiosk", 3],
  ["Archived_kioskinstall", 3],
  ["Archived_moscow", 3],
  ["Archived_SabreFiscal", 3],
  ["ATSDelphi", 3],
  ["ATSDotNet", 3],
  ["ATSFiscal", 3],
  ["ATSFS", 3],
  ["ATSWeb", 3],
  ["COMORDER", 3],
  ["EG", 3],
  ["OPUS", 3],
  ["SabreGate", 3],
  ["SYSVOL", 2, "share"],
  ["Принтеры", 2, "printers"],
  ["4U", 1, "computer"],
  ["ATSHDQ", 1, "computer"],
];

const localTree = [...mainTree.slice(2, 15), ["Сеть", 0, "network"]];

const mainList = {
  selected: "authz",
  columns: [
    { label: "Имя", width: "w-[140px]" },
    { label: "Дата изменения", width: "w-[107px]" },
    { label: "Тип", width: "w-[105px]" },
    { label: "Размер", width: "w-[70px]" },
  ],
  files: [
    ["Archived_assorted", "27.01.2011 3:12"],
    ["Archived_kiosk", "27.01.2011 3:16"],
    ["Archived_kioskinstall", "27.01.2011 3:18"],
    ["Archived_moscow", "27.01.2011 3:19"],
    ["Archived_SabreFiscal", "27.01.2011 3:20"],
    ["ATSDelphi", "27.01.2011 3:21"],
    ["ATSDotNet", "27.01.2011 3:21"],
    ["ATSFiscal", "27.01.2011 3:22"],
    ["ATSFS", "27.01.2011 3:23"],
    ["ATSWeb", "27.01.2011 3:24"],
    ["COMORDER", "27.01.2011 3:26"],
    ["EG", "27.01.2011 3:27"],
    ["OPUS", "27.01.2011 3:27"],
    ["SabreGate", "27.01.2011 3:27"],
    ["authz", "27.01.2011 2:19", "Файл", "1 КБ", "file"],
    ["authz-windows", "27.01.2011 3:06", "Файл", "1 КБ", "file"],
    ["htpasswd", "27.01.2011 3:27", "Файл", "1 КБ", "file"],
    ["server", "27.01.2011 3:27", "Текстовый док...", "9 КБ", "text"],
    ["server.pid", "27.01.2011 3:27", 'Файл "PID"', "1 КБ", "file"],
  ],
};

const localList = {
  selected: "authz-windows",
  columns: [
    { label: "Имя", width: "w-[140px]" },
    { label: "Дата измене...", width: "w-[105px]" },
    { label: "Тип", width: "w-[105px]" },
    { label: "Размер", width: "w-[70px]" },
    { label: "Ключевые слова", width: "" },
  ],
  files: [
    ["Archived_assorted", "27.01.2011 3:06"],
    ["Archived_kiosk", "27.01.2011 3:11"],
    ["Archived_kioskinstall", "27.01.2011 3:12"],
    ["Archived_moscow", "27.01.2011 3:13"],
    ["Archived_SabreFiscal", "27.01.2011 3:14"],
    ["ATSDelphi", "27.01.2011 3:14"],
    ["ATSDotNet", "27.01.2011 3:15"],
    ["ATSFiscal", "27.01.2011 3:16"],
    ["ATSFS", "27.01.2011 3:17"],
    ["ATSWeb", "27.01.2011 3:18"],
    ["COMORDER", "27.01.2011 3:20"],
    ["EG", "27.01.2011 3:21"],
    ["OPUS", "27.01.2011 3:23"],
    ["SabreGate", "27.01.2011 3:23"],
    ["authz", "27.01.2011 3:06", "Файл", "1 КБ", "file"],
    ["authz-windows", "27.01.2011 3:06", "Файл", "1 КБ", "file"],
    ["htpasswd", "27.01.2011 3:27", "Файл", "1 КБ", "file"],
    ["server.pid", "23.01.2011 6:16", 'Файл "PID"', "1 КБ", "file"],
  ],
};

export default function App() {
  return (
    <div className="h-screen flex flex-col overflow-hidden bg-[#195d7c] text-black text-[11px] leading-[13px] font-['Tahoma','DejaVu_Sans_Condensed','DejaVu_Sans',sans-serif]">
      <main className="flex-1 min-h-0 relative overflow-hidden">
        <div className="flex flex-col items-start">
          {shortcuts.map((s) => (
            <DesktopShortcut key={s.label} {...s} />
          ))}
        </div>

        <ServerManagerWindow className="left-[252px] top-[110px] w-[879px] h-[740px]" />

        <ExplorerWindow
          title="Repositories"
          className="left-[532px] top-[320px] w-[800px] h-[600px]"
          crumbs={["Repositories"]}
          crumbPad="pl-[150px]"
          tree={localTree}
          treePad="pt-[90px]"
          scroll={{ before: "h-[60px]", after: "h-[34px]" }}
          list={localList}
        />

        <ExplorerWindow
          active
          title="Repositories (\\2u)"
          className="left-[47px] top-[72px] w-[800px] h-[600px]"
          crumbs={["Сеть", "2u", "Repositories"]}
          crumbPad="pl-1.5"
          tree={mainTree}
          scroll={{ before: "h-[154px]", after: "h-[43px]" }}
          list={mainList}
        />

        <ContextMenu className="left-[394px] top-[448px] w-[208px]" />

        <svg width="13" height="21" viewBox="0 0 13 21" className="absolute left-[442px] top-[458px]">
          <path d="M.5.700v16l3.800-3.600 2.600 6.200 2.600-1.100-2.600-6h5.200z" fill="#fff" stroke="#000" />
        </svg>
      </main>
      <Taskbar />
    </div>
  );
}
